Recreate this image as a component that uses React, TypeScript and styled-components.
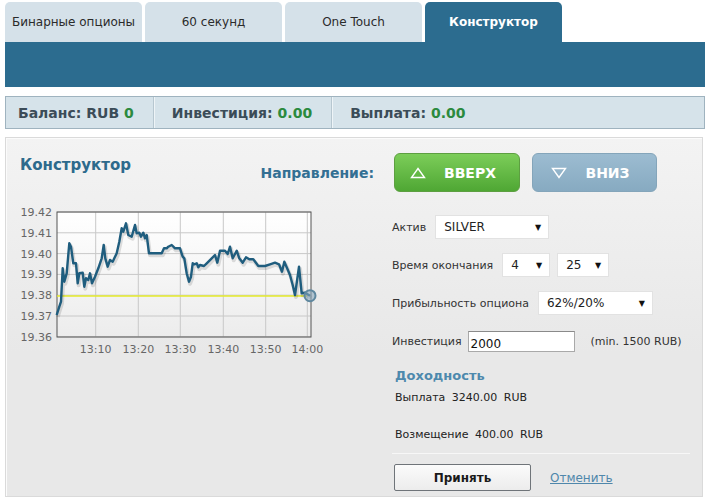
import React from "react";
import styled, { createGlobalStyle } from "styled-components";

const GlobalStyle = createGlobalStyle`
  html, body {
    margin: 0;
    padding: 0;
    background: #fff;
    font-family: "DejaVu Sans", Verdana, sans-serif;
    color: #222;
  }
`;

const Page = styled.div`
  width: 700px;
  margin-left: 5px;
  padding-top: 2px;
`;

const Tabs = styled.div`
  display: flex;
  gap: 3px;
  height: 40px;
`;

const Tab = styled.div<{ $active?: boolean }>`
  width: 137px;
  height: 40px;
  display: flex;
  align-items: center;
  justify-content: center;
  border-radius: 5px 5px 0 0;
  font-size: 12px;
  background: ${(p) => (p.$active ? "#2c6c8f" : "#d5e1e9")};
  color: ${(p) => (p.$active ? "#fff" : "#2b2b2b")};
  font-weight: ${(p) => (p.$active ? "bold" : "normal")};
`;

const Band = styled.div`
  height: 45px;
  background: #2c6c8f;
`;

const BalanceBar = styled.div`
  margin-top: 9px;
  height: 31px;
  display: flex;
  align-items: stretch;
  background: #d6e3ea;
  border: 1px solid #9fb3bf;
`;

const BalanceItem = styled.div`
  display: flex;
  align-items: center;
  padding: 0 19px 0 18px;
  font-size: 14px;
  font-weight: bold;
  color: #3b4c58;
  border-right: 1px solid #b7c7d0;
  box-shadow: 1px 0 0 #eef4f7;

  &:first-child {
    padding-left: 12px;
  }
  &:last-child {
    border-right: none;
    box-shadow: none;
  }
`;

const Green = styled.span`
  color: #2b8a3e;
  margin-left: 5px;
`;

const Panel = styled.div`
  margin-top: 8px;
  width: 698px;
  border: 1px solid #dadada;
  box-shadow: inset 1px 1px 0 #fbfbfb;
  background: linear-gradient(#f3f3f3, #e8e8e8 60%);
  padding: 15px 0 5px 14px;
  box-sizing: border-box;
`;

const Header = styled.div`
  display: grid;
  grid-template-columns: 372px 1fr;
`;

const HeaderLeft = styled.div`
  display: flex;
  justify-content: space-between;
  align-items: center;
`;

const Title = styled.div`
  align-self: flex-start;
  margin-top: 3px;
  font-size: 15px;
  font-weight: bold;
  color: #2d6a8c;
`;

const DirLabel = styled.div`
  font-size: 14px;
  font-weight: bold;
  color: #336f93;
  padding-right: 18px;
  margin-top: 1px;
`;

const Buttons = styled.div`
  display: flex;
  gap: 12px;
  margin-left: 2px;
`;

const DirButton = styled.div<{ $up?: boolean }>`
  width: ${(p) => (p.$up ? "126px" : "125px")};
  height: 39px;
  box-sizing: border-box;
  border-radius: 6px;
  display: flex;
  align-items: center;
  justify-content: center;
  gap: 18px;
  color: #fff;
  font-size: 14px;
  font-weight: bold;
  background: ${(p) =>
    p.$up
      ? "linear-gradient(#7ccd59, #4fa734)"
      : "linear-gradient(#9cbcd1, #87aac1)"};
  border: 1px solid ${(p) => (p.$up ? "#5d9f41" : "#84a5ba")};
  padding-right: 8px;
`;

const Body = styled.div`
  display: grid;
  grid-template-columns: 372px 1fr;
  margin-top: 13px;
`;

const ChartBox = styled.div`
  margin-left: -5px;
`;

const Form = styled.div`
  padding-top: 10px;
  display: flex;
  flex-direction: column;
  width: 298px;
`;

const Row = styled.div<{ $gap?: number }>`
  display: flex;
  align-items: center;
  gap: 7px;
  height: 24px;
  margin-bottom: ${(p) => p.$gap ?? 14}px;
  font-size: 11px;
  color: #333;
`;

const Label = styled.span`
  margin-right: 2px;
`;

const Select = styled.div<{ $w: number }>`
  width: ${(p) => p.$w}px;
  height: 24px;
  box-sizing: border-box;
  background: #fff;
  border: 1px solid #e2e2e2;
  display: flex;
  align-items: center;
  justify-content: space-between;
  padding: 0 7px 0 8px;
  font-size: 12px;
  color: #222;

  &::after {
    content: "▼";
    font-size: 8px;
    color: #111;
  }
`;

const Input = styled.div`
  width: 107px;
  height: 21px;
  box-sizing: border-box;
  background: #fff;
  border: 1px solid #a9a9a9;
  border-top-color: #8a8a8a;
  font-size: 12px;
  padding: 5px 0 0 2px;
  margin: 0 0 0 -3px;
  color: #111;
`;

const Hint = styled.span`
  margin-left: 9px;
`;

const SubTitle = styled.div`
  margin: 15px 0 0 3px;
  font-size: 13px;
  font-weight: bold;
  color: #4d89ad;
`;

const Line = styled.div<{ $mt: number }>`
  margin: ${(p) => p.$mt}px 0 0 3px;
  font-size: 11px;
  color: #222;
  word-spacing: 3px;
`;

const Divider = styled.div`
  margin-top: 12px;
  height: 1px;
  background: #f7f7f7;
`;

const Actions = styled.div`
  display: flex;
  align-items: center;
  gap: 19px;
  margin: 10px 0 0 2px;
`;

const AcceptButton = styled.div`
  width: 137px;
  height: 27px;
  box-sizing: border-box;
  border: 1px solid #6f7479;
  border-radius: 2px;
  background: linear-gradient(#fbfbfb, #ececec);
  display: flex;
  align-items: center;
  justify-content: center;
  font-size: 12px;
  font-weight: bold;
  color: #1a1a1a;
`;

const CancelLink = styled.a`
  font-size: 12px;
  color: #4f87ab;
  text-decoration: underline;
`;

const series: [number, number][] = [
  [56.7, 315], [59.3, 306.7], [61, 301.7], [62.7, 268.3], [64.3, 281.7],
  [66.7, 273.3], [69.3, 243.3], [71, 246.7], [73.3, 263.3], [76, 263.3],
  [77.7, 283.3], [79.3, 273.3], [82.7, 272.7], [84.3, 286.7], [86, 278.3],
  [88.3, 280], [90, 273.3], [92, 283.3], [95, 276.7], [98.3, 268.3],
  [101.7, 258.3], [103.7, 245], [105.3, 258.3], [107.7, 266.7], [110, 260],
  [112.7, 261.7], [114.3, 258.3], [116.7, 253.3], [119.3, 241.7], [121.7, 228.3],
  [123.3, 231.7], [126, 223.3], [128.3, 235], [131.7, 236.7], [135, 225],
  [136.7, 233.3], [139.3, 232.7], [141, 236.7], [143.3, 232.7], [145, 238.3],
  [146.7, 235], [149, 253.3], [161.7, 253.3], [164, 248.3], [166.7, 248.3],
  [168.3, 246.7], [171.7, 245], [175, 248.3], [180, 248.3], [182.7, 256.7],
  [184.3, 258.3], [186.7, 273.3], [189, 281.7], [191, 276.7], [192.7, 263.3],
  [194.3, 264.3], [196.7, 263.3], [198.3, 267.3], [200, 265], [204, 266],
  [206.7, 263.3], [211.7, 258.3], [215, 255], [217.3, 262.7], [220, 250.7],
  [225, 250.7], [227.7, 254], [230, 246.7], [232.7, 258.3], [236.7, 250.7],
  [239.3, 258.3], [242.7, 262.7], [246, 257.3], [249.3, 259.3], [253.3, 259.3],
  [258.3, 266], [265, 266], [270, 264.3], [275, 262.7], [279, 264.3],
  [282, 271.7], [284.3, 261.7], [286.7, 267.3], [290, 275], [292.7, 285],
  [295, 295], [299, 266.7], [301.7, 293.3], [305, 292.7], [310, 295.7],
];

const yTicks = ["19.42", "19.41", "19.40", "19.39", "19.38", "19.37", "19.36"];
const xTicks = ["13:10", "13:20", "13:30", "13:40", "13:50", "14:00"];

const Chart = () => {
  const pts = series.map(([x, y]) => `${x},${y}`).join(" ");
  const top = 212;
  const step = 20.8;
  const xs = [95.7, 138.3, 180.3, 223.3, 265.7, 307.3];
  return (
    <svg width="310" height="152" viewBox="15 205 310 152">
      <defs>
        <linearGradient id="plotbg" x1="0" y1="0" x2="0" y2="1">
          <stop offset="0" stopColor="#ffffff" />
          <stop offset="1" stopColor="#ececec" />
        </linearGradient>
      </defs>
      <rect x="57" y={top} width="254" height="125" fill="url(#plotbg)" />
      {yTicks.map((_, i) => (
        <line key={i} x1="57" x2="311" y1={top + i * step} y2={top + i * step} stroke="#c8c8c8" strokeWidth="1" />
      ))}
      {xs.map((x) => (
        <line key={x} x1={x} x2={x} y1={top} y2={337} stroke="#c8c8c8" strokeWidth="1" />
      ))}
      <rect x="57" y={top} width="254" height="125" fill="none" stroke="#555" strokeWidth="1" />
      <line x1="57" x2="307" y1="296" y2="296" stroke="#e4ea2a" strokeWidth="1.5" />
      <polyline points={pts} fill="none" stroke="#000" strokeOpacity="0.12" strokeWidth="4" transform="translate(1,2)" strokeLinejoin="round" />
      <polyline points={pts} fill="none" stroke="#1f5d7e" strokeWidth="2.4" strokeLinejoin="round" />
      <circle cx="310" cy="295.7" r="5.5" fill="#8aa9bc" fillOpacity="0.6" stroke="#5f889f" strokeWidth="2" />
      {yTicks.map((t, i) => (
        <text key={t} x="52" y={top + i * step + 4} textAnchor="end" fontSize="11" fill="#666" fontFamily="DejaVu Sans, sans-serif">
          {t}
        </text>
      ))}
      {xTicks.map((t, i) => (
        <text key={t} x={xs[i]} y="353" textAnchor="middle" fontSize="11" fill="#666" fontFamily="DejaVu Sans, sans-serif">
          {t}
        </text>
      ))}
    </svg>
  );
};

const Triangle = ({ up }: { up?: boolean }) => (
  <svg width="16" height="12" viewBox="0 0 16 12">
    <polygon
      points={up ? "8,1.5 14.5,10.5 1.5,10.5" : "1.5,1.5 14.5,1.5 8,10.5"}
      fill="none"
      stroke="#fff"
      strokeWidth="1.4"
    />
  </svg>
);

export default function App() {
  return (
    <Page>
      <GlobalStyle />
      <Tabs>
        <Tab>Бинарные опционы</Tab>
        <Tab>60 секунд</Tab>
        <Tab>One Touch</Tab>
        <Tab $active>Конструктор</Tab>
      </Tabs>
      <Band />
      <BalanceBar>
        <BalanceItem>
          Баланс: RUB<Green>0</Green>
        </BalanceItem>
        <BalanceItem>
          Инвестиция:<Green>0.00</Green>
        </BalanceItem>
        <BalanceItem>
          Выплата:<Green>0.00</Green>
        </BalanceItem>
      </BalanceBar>
      <Panel>
        <Header>
          <HeaderLeft>
            <Title>Конструктор</Title>
            <DirLabel>Направление:</DirLabel>
          </HeaderLeft>
          <Buttons>
            <DirButton $up>
              <Triangle up />
              ВВЕРХ
            </DirButton>
            <DirButton>
              <Triangle />
              ВНИЗ
            </DirButton>
          </Buttons>
        </Header>
        <Body>
          <ChartBox>
            <Chart />
          </ChartBox>
          <Form>
            <Row>
              <Label>Актив</Label>
              <Select $w={114}>SILVER</Select>
            </Row>
            <Row>
              <Label>Время окончания</Label>
              <Select $w={48}>4</Select>
              <Select $w={52}>25</Select>
            </Row>
            <Row>
              <Label>Прибыльность опциона</Label>
              <Select $w={115}>62%/20%</Select>
            </Row>
            <Row $gap={0}>
              <Label>Инвестиция</Label>
              <Input>2000</Input>
              <Hint>(min. 1500 RUB)</Hint>
            </Row>
            <SubTitle>Доходность</SubTitle>
            <Line $mt={8}>Выплата 3240.00 RUB</Line>
            <Line $mt={24}>Возмещение 400.00 RUB</Line>
            <Divider />
            <Actions>
              <AcceptButton>Принять</AcceptButton>
              <CancelLink>Отменить</CancelLink>
            </Actions>
          </Form>
        </Body>
      </Panel>
    </Page>
  );
}
